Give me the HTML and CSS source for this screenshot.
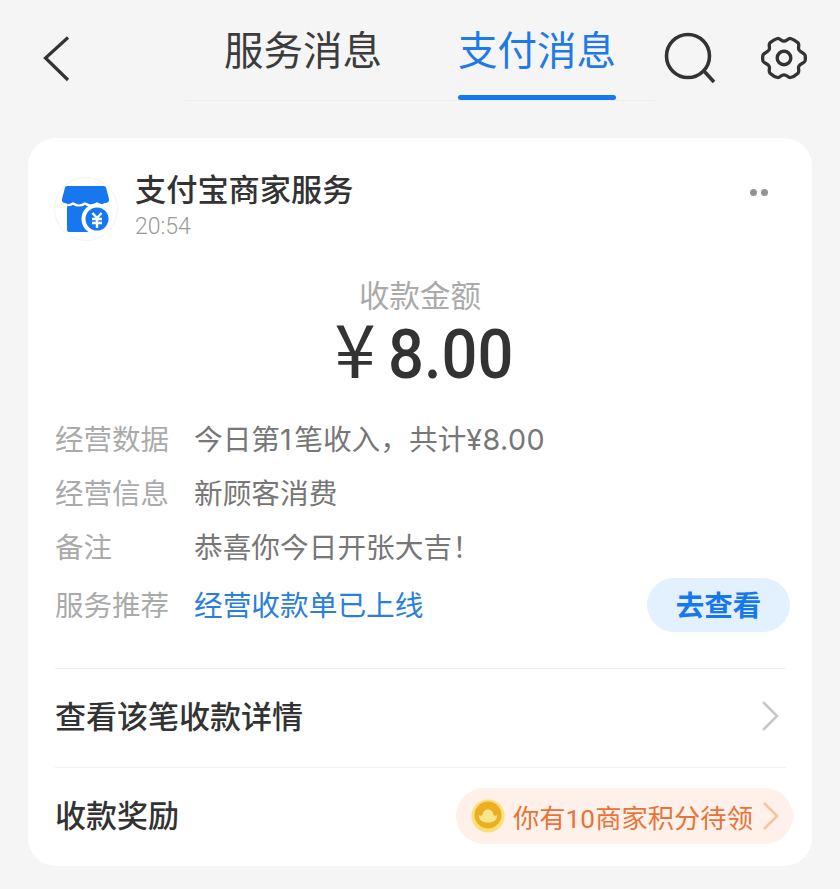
FILE: index.html
```html
<!DOCTYPE html>
<html lang="zh-CN">
<head>
<meta charset="utf-8">
<title>支付消息</title>
<link rel="stylesheet" href="styles.css">
</head>
<body>
<header class="topbar">
  <svg class="back" width="32" height="50" viewBox="0 0 32 50"><path d="M28 5.500 L5.500 26 L28 48" fill="none" stroke="#333" stroke-width="3.200"/></svg>
  <nav class="tabs">
    <span class="tab">服务消息</span>
    <span class="tab tab-active">支付消息</span>
  </nav>
  <svg class="search" width="54" height="54" viewBox="0 0 54 54"><circle cx="25" cy="24" r="21.500" fill="none" stroke="#333" stroke-width="3.600"/><path d="M41 39 L51 50" fill="none" stroke="#333" stroke-width="3.600"/></svg>
  <svg class="gear" width="50" height="50" viewBox="0 0 50 50"><path d="M18.500 5.500 C21 5 22 8.200 25 8.200 C28 8.200 29 5 31.500 5.500 C34 6.100 37 8 39 9.800 C41 12 38.500 14.500 40 17 C41.500 19.500 45 19.500 46 22 C46.500 24 46.500 26 46 28 C45 30.500 41.500 30.500 40 33 C38.500 35.500 41 38 39 40.200 C37 42 34 43.900 31.500 44.500 C29 45 28 41.800 25 41.800 C22 41.800 21 45 18.500 44.500 C16 43.900 13 42 11 40.200 C9 38 11.500 35.500 10 33 C8.500 30.500 5 30.500 4 28 C3.500 26 3.500 24 4 22 C5 19.500 8.500 19.500 10 17 C11.500 14.500 9 12 11 9.800 C13 8 16 6.100 18.500 5.500 Z" fill="none" stroke="#333" stroke-width="3.300" stroke-linejoin="round"/><circle cx="25" cy="25" r="6.800" fill="none" stroke="#333" stroke-width="3.400"/></svg>
</header>

<main class="card">
  <section class="sender">
    <div class="avatar">
      <svg width="62" height="62" viewBox="0 0 62 62">
        <path d="M12 22 H48 V52 Q48 54 46 54 H14 Q12 54 12 52 Z" fill="#1677ee"/>
        <path d="M12 8 H49 Q50.500 8 51 9.500 L54 21 Q54.500 25 50 25 Q46 27 42 24 Q36 28 30 24 Q24 28 18 24 Q14 27 10 25 Q6.500 25 7 21 L10 9.500 Q10.500 8 12 8 Z" fill="#1677ee"/>
        <path d="M7 25.500 Q12.500 29 18 25.500 Q24 29.500 30 25.500 Q36 29.500 42 25.500 Q48 29 54 25.500" fill="none" stroke="#fff" stroke-width="2.200"/>
        <circle cx="42" cy="41" r="13.500" fill="#1677ee" stroke="#fff" stroke-width="4"/>
        <path d="M37.500 35 L42 40 L46.500 35 M37 41 H47 M37 45 H47 M42 40 V50" fill="none" stroke="#fff" stroke-width="2.400"/>
      </svg>
    </div>
    <div class="sender-text">
      <div class="sender-name">支付宝商家服务</div>
      <div class="sender-time">20:54</div>
    </div>
    <div class="more"><i></i><i></i></div>
  </section>

  <section class="amount">
    <div class="amount-label">收款金额</div>
    <div class="amount-value"><span class="amount-sign">¥</span><span class="amount-num">8.00</span></div>
  </section>

  <section class="info">
    <div class="info-row"><span class="info-label">经营数据</span><span class="info-value">今日第<span class="digit-one">1</span>笔收入，共计<span class="digits">¥8.00</span></span></div>
    <div class="info-row"><span class="info-label">经营信息</span><span class="info-value">新顾客消费</span></div>
    <div class="info-row"><span class="info-label">备注</span><span class="info-value">恭喜你今日开张大吉！</span></div>
    <div class="info-row info-row-action">
      <span class="info-label">服务推荐</span>
      <span class="info-value info-link">经营收款单已上线</span>
      <span class="action-btn">去查看</span>
    </div>
  </section>

  <section class="list">
    <div class="list-row">
      <span class="list-title">查看该笔收款详情</span>
      <svg class="chev" width="20" height="32" viewBox="0 0 20 32"><path d="M3 2 L17 16 L3 30" fill="none" stroke="#c8c8c8" stroke-width="2.600"/></svg>
    </div>
    <div class="list-row">
      <span class="list-title">收款奖励</span>
      <span class="reward">
        <svg class="coin" width="34" height="34" viewBox="0 0 34 34">
          <circle cx="17" cy="17" r="16.500" fill="#fbe07a"/>
          <circle cx="17" cy="16" r="13.500" fill="#eeae22"/>
          <path d="M7.500 16 C10 18 11 16 12 15 C12 9 22 9 22 15 C23 16 24 18 26.500 16 C26 21 23 23.500 17 23.500 C11 23.500 8 21 7.500 16 Z" fill="#fde58c"/>
        </svg>
        <span class="reward-text">你有10商家积分待领</span>
        <svg class="chev-reward" width="20" height="32" viewBox="0 0 20 32"><path d="M3 3 L16 16 L3 29" fill="none" stroke="#f4c1a8" stroke-width="2.600"/></svg>
      </span>
    </div>
  </section>
</main>
</body>
</html>
```
FILE: styles.css
```css
* { box-sizing: border-box; }
html, body { margin: 0; padding: 0; }
body {
  width: 840px;
  height: 889px;
  overflow: hidden;
  background: #f5f5f5;
  font-family: "Roboto", "Noto Sans CJK SC", sans-serif;
  color: #333;
}
.topbar {
  display: flex;
  align-items: flex-start;
  height: 138px;
  padding-left: 40px;
}
.back { margin-top: 32px; flex: none; }
.tabs {
  display: flex;
  gap: 76px;
  width: 470px;
  height: 101px;
  margin-left: 113px;
  padding-left: 39px;
  border-bottom: 1px solid #eeeeee;
  flex: none;
}
.tab {
  position: relative;
  font-size: 39.500px;
  line-height: 50px;
  padding-top: 27px;
  height: 100px;
  color: #3c3c3c;
}
.tab-active { color: #1f7ae6; }
.tab-active::after {
  content: "";
  position: absolute;
  left: 0;
  right: 0;
  bottom: 0;
  height: 5px;
  border-radius: 3px;
  background: #1677ee;
}
.search { margin: 32px 0 0 8px; flex: none; }
.gear { margin: 33px 0 0 42px; flex: none; }

.card {
  width: 784px;
  height: 728px;
  margin-left: 28px;
  padding: 39px 27px 0;
  background: #fff;
  border-radius: 28px;
}
.sender { display: flex; align-items: flex-start; height: 63px; }
.avatar {
  display: flex;
  align-items: center;
  justify-content: center;
  width: 64px;
  height: 64px;
  margin-left: -1px;
  flex: none;
  border: 1px solid #f3f3f3;
  border-radius: 50%;
}
.sender-text { margin-left: 17px; flex: 1; }
.sender-name {
  font-size: 31.200px;
  font-weight: 500;
  line-height: 40px;
  margin-top: -6px;
  color: #333;
}
.sender-time {
  font-size: 23px;
  font-weight: 300;
  line-height: 30px;
  margin-top: 1px;
  color: #999;
}
.more { display: flex; gap: 4px; margin: 12px 17px 0 0; }
.more i { width: 7px; height: 7px; border-radius: 50%; background: #949494; }

.amount { text-align: center; margin-top: 36px; }
.amount-label { font-size: 30.500px; line-height: 42px; color: #aaa; }
.amount-value {
  display: flex;
  justify-content: center;
  align-items: baseline;
  height: 72px;
  margin-top: -8px;
  font-size: 68px;
  font-weight: 500;
  line-height: 72px;
  color: #333;
}
.amount-sign { font-family: "Noto Sans CJK SC", sans-serif; font-size: 74px; font-weight: 400; margin-right: 12px; }
.amount-num { display: inline-block; transform: scaleX(0.93); transform-origin: left center; margin-right: -17px; }

.info { margin-top: 28px; }
.info-row {
  display: flex;
  align-items: center;
  height: 54px;
  font-size: 28.700px;
}
.info-label { width: 139px; flex: none; font-size: 28.500px; color: #aaa; }
.info-value { color: #777; font-family: "Inter", "Noto Sans CJK SC", sans-serif; }
.digit-one { letter-spacing: 2.500px; }
.digits { letter-spacing: 0.400px; }
.info-link { color: #2a7fde; flex: 1; }
.info-row-action { margin-top: 6px; margin-right: -5px; }
.info-row-action .info-label,
.info-row-action .info-value { padding-bottom: 4px; }
.action-btn {
  display: flex;
  align-items: center;
  justify-content: center;
  width: 143px;
  height: 54px;
  padding-bottom: 4px;
  border-radius: 27px;
  background: #e3f0fe;
  color: #1677ee;
  font-size: 28.500px;
  font-weight: 700;
}

.list { margin: 36px -1px 0 0; }
.list-row {
  display: flex;
  align-items: center;
  justify-content: space-between;
  height: 99px;
  padding-bottom: 4px;
  border-top: 1px solid #f0f0f0;
}
.list-title { font-size: 31px; font-weight: 500; color: #333; padding-bottom: 4px; }
.chev { margin-right: 6px; }
.reward {
  display: flex;
  align-items: center;
  width: 337px;
  height: 56px;
  margin: 2px -7px 0 0;
  padding-left: 15px;
  border-radius: 28px;
  background: #fff1e9;
}
.coin { flex: none; }
.reward-text { margin-left: 8px; font-size: 26.300px; color: #e8733a; white-space: nowrap; }
.chev-reward { margin-left: 8px; flex: none; }
```
